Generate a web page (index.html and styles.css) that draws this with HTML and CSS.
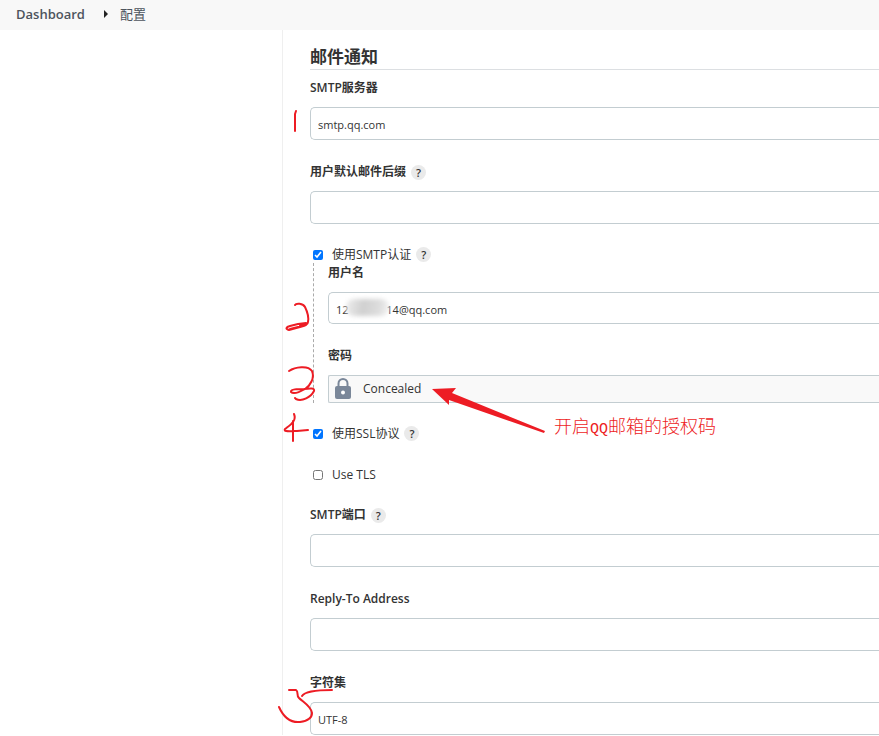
FILE: index.html
```html
<!DOCTYPE html>
<html lang="zh-CN">
<head>
<meta charset="utf-8">
<title>配置</title>
<link rel="stylesheet" href="styles.css">
</head>
<body>
<nav class="breadcrumbs">
  <a class="home" href="#">Dashboard</a>
  <span class="chevron"></span>
  <a href="#">配置</a>
</nav>
<div class="page">
  <aside class="side"></aside>
  <main class="config">
    <h1>邮件通知</h1>
    <div class="field">
      <div class="label"><label for="server">SMTP服务器</label></div>
      <input class="text" id="server" type="text" value="smtp.qq.com">
    </div>
    <div class="field">
      <div class="label"><label for="suffix">用户默认邮件后缀</label><button class="help" type="button">?</button></div>
      <input class="text" id="suffix" type="text">
    </div>
    <div class="check">
      <input id="auth" type="checkbox" checked><label for="auth">使用SMTP认证</label><button class="help" type="button">?</button>
    </div>
    <div class="nested">
      <div class="field">
        <div class="label"><label for="user">用户名</label></div>
        <div class="masked">
          <input class="text" id="user" type="text" value="12&#x2007;&#x2007;&#x2007;&#x2007;&#x2007;&#x2007;14@qq.com">
          <span class="smudge"></span>
        </div>
      </div>
      <div class="field">
        <div class="label">密码</div>
        <div class="concealed">
          <svg width="18" height="22" viewBox="0 0 18 22"><path d="M4.500 9V5.500a4.500 4.500 0 0 1 9 0V9" fill="none" stroke="#7a8799" stroke-width="2"/><rect x="1" y="8" width="16" height="13" rx="2" fill="#7a8799"/><circle cx="9" cy="14.500" r="2" fill="#fff"/></svg>
          <span>Concealed</span>
        </div>
      </div>
    </div>
    <div class="check">
      <input id="ssl" type="checkbox" checked><label for="ssl">使用SSL协议</label><button class="help" type="button">?</button>
    </div>
    <div class="check">
      <input id="tls" type="checkbox"><label for="tls">Use TLS</label>
    </div>
    <div class="field">
      <div class="label"><label for="port">SMTP端口</label><button class="help" type="button">?</button></div>
      <input class="text" id="port" type="text">
    </div>
    <div class="field">
      <div class="label"><label for="reply">Reply-To Address</label></div>
      <input class="text" id="reply" type="text">
    </div>
    <div class="field">
      <div class="label"><label for="charset">字符集</label></div>
      <input class="text" id="charset" type="text" value="UTF-8">
    </div>
  </main>
</div>
<svg class="ink" width="560" height="736" viewBox="0 0 560 736">
  <g fill="none" stroke="#ed1c24" stroke-width="2" stroke-linecap="round" stroke-linejoin="round">
    <path d="M296 111L295 114V131"/>
    <path d="M295 305C296 303 303 303 305 307C307 311 309 317 308 322C308 325 304 326 300 327L289 330C285 329 286 327 290 326L298 324L306 323M290 329L306 325M300 325L307 324"/>
    <path d="M289 371C295 367 308 365 312 371C315 378 310 386 305 389C298 393 293 394 291 392C290 389 298 389 304 389C311 388 315 388 314 391C311 397 302 402 296 399L295 398"/>
    <path d="M294 414C297 421 290 425 285 429C283 432 290 431 297 431L308 430M293 421V441"/>
    <path d="M289 690H296C299 692 296 695 299 698C303 702 311 706 312 713C312 719 307 721 300 722C290 723 283 716 279 707M302 696C305 691 319 690 332 690"/>
  </g>
  <path d="M432 389L456 388L452 393L545 431L544 433L449 400V405Z" fill="#ed1c24"/>
</svg>
<p class="note">开启<span>QQ</span>邮箱的授权码</p>
</body>
</html>
```
FILE: styles.css
```css
* {
  box-sizing: border-box;
}

body {
  margin: 0;
  position: relative;
  background: #fff;
  color: #333;
  font: 12px/20px "Open Sans", "Noto Sans CJK SC", sans-serif;
}

.breadcrumbs {
  display: flex;
  align-items: center;
  height: 30px;
  padding: 0 16px 2px;
  background: #f8f8f8;
  font-size: 13px;
}

.breadcrumbs a {
  color: #4d545d;
  text-decoration: none;
}

.breadcrumbs .home {
  font-weight: 600;
}

.chevron {
  margin: 0 12px 0 19px;
  border: 4px solid transparent;
  border-left-color: #222;
  border-right-width: 0;
}

.page {
  display: flex;
}

.side {
  flex: 0 0 282px;
}

.config {
  flex: 1;
  min-width: 0;
  padding: 15px 0 0 27px;
  border-left: 1px solid #efefef;
}

h1 {
  margin: 0 0 8px;
  border-bottom: 1px solid #dcdfe2;
  font-size: 17px;
  line-height: 24px;
  font-weight: 700;
}

.field {
  margin-bottom: 22px;
}

.field:last-child {
  margin-bottom: 0;
}

.label {
  display: flex;
  align-items: center;
  height: 20px;
  margin-bottom: 9px;
  font-weight: 600;
}

.label label,
.check label {
  white-space: nowrap;
}

.help {
  flex: none;
  width: 15px;
  height: 15px;
  margin-left: 5px;
  padding: 0;
  border: 0;
  border-radius: 50%;
  background: #eaeaea;
  color: #333;
  font: 600 11px/15px "Open Sans", sans-serif;
}

.text {
  display: block;
  width: 100%;
  height: 33px;
  padding: 2px 7px 0;
  border: 1px solid #c3cdd1;
  border-right: 0;
  border-radius: 5px 0 0 5px;
  background: #fff;
  color: #333;
  font: inherit;
  font-size: 11px;
}

.nested .text {
  height: 32px;
}

.check {
  display: flex;
  align-items: center;
  height: 17px;
  margin-bottom: 24px;
}

.check:has(+ .nested) {
  margin-bottom: 0;
}

.check:has(+ .field) {
  margin-bottom: 22px;
}

.check input {
  width: 10px;
  height: 10px;
  margin: 0 9px 0 3px;
}

.nested {
  margin: 0 0 22px 3px;
  padding-left: 14px;
  border-left: 1px dashed #aaa;
}

.masked {
  position: relative;
}

.smudge {
  position: absolute;
  left: 18px;
  top: 7px;
  width: 43px;
  height: 17px;
  border-radius: 8px;
  background: linear-gradient(100deg, #eee, #d0d0d0 40%, #ddd 75%, #f4f4f4);
  filter: blur(2px);
}

.concealed {
  display: flex;
  align-items: center;
  gap: 11px;
  height: 28px;
  padding-left: 5px;
  border: 1px solid #c3cdd1;
  border-right: 0;
  border-radius: 2px 0 0 2px;
  background: #f9f9f9;
}

.ink {
  position: absolute;
  left: 0;
  top: 0;
  pointer-events: none;
}

.note {
  position: absolute;
  left: 554px;
  top: 412px;
  margin: 0;
  color: #ed1c24;
  font: 300 18px/26px "Noto Sans CJK SC", sans-serif;
  white-space: nowrap;
}

.note span {
  font-family: "Liberation Mono", monospace;
  font-size: 15px;
}
```
